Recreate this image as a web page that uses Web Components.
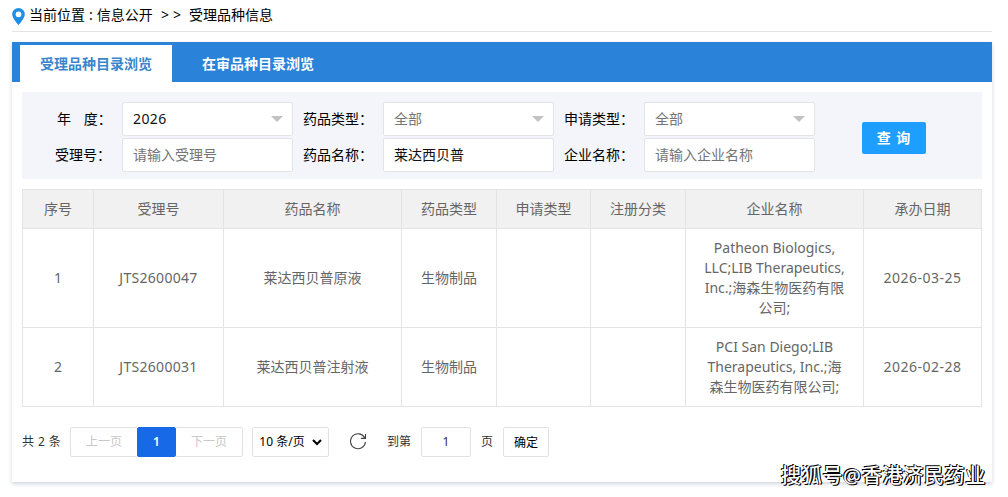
<!DOCTYPE html>
<html lang="zh-CN">
<head>
    <meta charset="UTF-8">
    <meta name="viewport" content="width=device-width, initial-scale=1.0">
    <title>受理品种信息</title>
    <style>
    body {
        margin: 0;
        height: 497px;
        overflow: hidden;
        position: relative;
        background: #fff;
        color: #000;
        font: 14px/20px 'Noto Sans', 'Noto Sans CJK SC', sans-serif;
    }
    </style>
</head>
<body>
<bread-crumb>当前位置 : 信息公开&nbsp; &gt; &gt; &nbsp;受理品种信息</bread-crumb>
<tab-card>
    <tab-item slot="tab" active>受理品种目录浏览</tab-item>
    <tab-item slot="tab">在审品种目录浏览</tab-item>
    <search-form></search-form>
    <drug-table></drug-table>
    <page-bar></page-bar>
</tab-card>
<water-mark>搜狐号@香港济民药业</water-mark>
<script>
class BaseElement extends HTMLElement {

    constructor() {
        super();
        this.root = this.attachShadow({mode: 'open'});
    }

    connectedCallback() {
        this.root.innerHTML = this.template();
    }
}

class BreadCrumb extends BaseElement {
    template() {
        return `
        <style>
        :host {
            display: flex;
            align-items: center;
            box-sizing: border-box;
            height: 32px;
            margin: 0 16px 10px 12px;
            padding-bottom: 1px;
            border-bottom: 1px solid #e4e4e4;
            word-spacing: .4px;
        }
        svg { margin: 2px 4px 0 0; }
        </style>
        <svg width="13" height="17" viewBox="0 0 13 17">
            <path fill="#1f8fe6" fill-rule="evenodd" d="M6.5 0A6.3 6.3 0 0 0 .2 6.3C.2 10.7 6.5 17 6.5 17S12.8 10.7 12.8 6.3A6.3 6.3 0 0 0 6.5 0zM6.5 3.4a2.9 2.9 0 1 1 0 5.8a2.9 2.9 0 0 1 0-5.8z"/>
        </svg>
        <slot></slot>`;
    }
}

class TabCard extends BaseElement {
    template() {
        return `
        <style>
        :host {
            display: block;
            box-sizing: border-box;
            height: 440px;
            margin: 0 16px 0 12px;
            background: #fff;
            box-shadow: 0 2px 4px rgba(50, 70, 120, .22);
        }
        .tabs {
            display: flex;
            box-sizing: border-box;
            height: 40px;
            padding: 3px 8px 0;
            background: #2a82d9;
        }
        .body { padding: 10px 10px 0; }
        </style>
        <div class="tabs"><slot name="tab"></slot></div>
        <div class="body"><slot></slot></div>`;
    }
}

class TabItem extends BaseElement {
    template() {
        return `
        <style>
        :host {
            box-sizing: border-box;
            width: 152px;
            margin-right: 10px;
            text-align: center;
            line-height: 38px;
            font-weight: 600;
            color: #fff;
        }
        :host([active]) {
            background: #fff;
            color: #3a86cc;
        }
        </style>
        <slot></slot>`;
    }
}

class FormField extends BaseElement {
    template() {
        const arrow = this.hasAttribute('select') ? '<i></i>' : '';
        return `
        <style>
        :host { display: flex; align-items: center; }
        label {
            flex: none;
            width: var(--label-width, 80px);
            white-space: pre;
        }
        :host([year]) label { text-indent: 2px; word-spacing: .6px; }
        .box {
            display: flex;
            align-items: center;
            justify-content: space-between;
            box-sizing: border-box;
            width: 171px;
            height: 34px;
            padding: 0 10px;
            border: 1px solid #e4e4e8;
            border-radius: 2px;
            background: #fff;
            color: #757575;
        }
        :host([filled]) .box { color: #111; }
        :host([year]) .box { letter-spacing: .4px; }
        i {
            margin-right: -1px;
            border: 6px solid transparent;
            border-top-color: #c2c2c2;
            border-bottom: 0;
        }
        </style>
        <label>${this.getAttribute('label')}</label>
        <div class="box"><slot></slot>${arrow}</div>`;
    }
}

class SearchForm extends BaseElement {
    template() {
        return `
        <style>
        :host {
            display: flex;
            align-items: center;
            box-sizing: border-box;
            height: 87px;
            margin-bottom: 10px;
            padding: 2px 0 0 33px;
            background: #f3f5fa;
        }
        .fields {
            display: grid;
            grid-template-columns: 238px 251px 251px;
            gap: 2px 10px;
        }
        .first { --label-width: 67px; }
        button {
            width: 64px;
            height: 32px;
            margin: 2px 0 0 47px;
            padding: 0;
            border: 0;
            border-radius: 2px;
            background: #1e9fff;
            color: #fff;
            font: 600 14px/32px 'Noto Sans', 'Noto Sans CJK SC', sans-serif;
            letter-spacing: 1px;
        }
        </style>
        <div class="fields">
            <form-field class="first" label="年   度：" year select filled>2026</form-field>
            <form-field label="药品类型：" select>全部</form-field>
            <form-field label="申请类型：" select>全部</form-field>
            <form-field class="first" label="受理号：">请输入受理号</form-field>
            <form-field label="药品名称：" filled>莱达西贝普</form-field>
            <form-field label="企业名称：">请输入企业名称</form-field>
        </div>
        <button>查 询</button>`;
    }
}

const COLUMNS = [
    ['序号', 71], ['受理号', 130], ['药品名称', 178], ['药品类型', 95],
    ['申请类型', 94], ['注册分类', 95], ['企业名称', 178], ['承办日期', 118]
];

const ROWS = [
    ['1', 'JTS2600047', '莱达西贝普原液', '生物制品', '', '',
        'Patheon Biologics,<br>LLC;LIB Therapeutics,<br>Inc.;海森生物医药有限<br>公司;', '2026-03-25'],
    ['2', 'JTS2600031', '莱达西贝普注射液', '生物制品', '', '',
        'PCI San Diego;LIB<br>Therapeutics, Inc.;海<br>森生物医药有限公司;', '2026-02-28']
];

class DrugTable extends BaseElement {
    template() {
        return `
        <style>
        :host { display: block; color: #666; }
        table {
            width: 960px;
            table-layout: fixed;
            border-collapse: collapse;
            text-align: center;
        }
        th, td {
            padding: 0;
            border: 1px solid #e4e4e4;
            font-weight: 400;
            white-space: nowrap;
        }
        th { height: 38px; background: #f1f1f1; }
        tr:nth-child(1) td { height: 98px; }
        tr:nth-child(2) td { height: 78px; }
        td:nth-child(2) { letter-spacing: .3px; }
        td:nth-child(8) { letter-spacing: .5px; }
        </style>
        <table>
            <colgroup>${COLUMNS.map(c => `<col style="width: ${c[1]}px">`).join('')}</colgroup>
            <thead><tr>${COLUMNS.map(c => `<th>${c[0]}</th>`).join('')}</tr></thead>
            <tbody>${ROWS.map(r => `<tr>${r.map(v => `<td>${v}</td>`).join('')}</tr>`).join('')}</tbody>
        </table>`;
    }
}

class PageBar extends BaseElement {
    template() {
        return `
        <style>
        :host {
            display: flex;
            align-items: center;
            height: 30px;
            margin-top: 20px;
            font-size: 12px;
            color: #333;
            white-space: pre;
        }
        .box {
            display: flex;
            align-items: center;
            justify-content: center;
            box-sizing: border-box;
            height: 30px;
            border: 1px solid #e2e2e2;
            border-radius: 2px;
            background: #fff;
        }
        .total { width: 48px; word-spacing: .8px; }
        .prev, .next { width: 68px; color: #c8c8c8; }
        .current {
            width: 39px;
            margin: 0 -1px;
            border-color: #1769e8;
            background: #1769e8;
            color: #fff;
            font-weight: 600;
            z-index: 1;
        }
        .limit { width: 77px; margin: 0 20px 0 9px; gap: 7px; color: #000; }
        .to { margin: 0 10px 0 20px; }
        .num { width: 50px; }
        .page { margin: 0 10px; }
        .ok { width: 46px; padding-top: 2px; color: #000; }
        </style>
        <span class="total">共 2 条</span>
        <span class="box prev">上一页</span>
        <span class="box current">1</span>
        <span class="box next">下一页</span>
        <span class="box limit">10 条/页<svg width="10" height="7" viewBox="0 0 10 7" fill="none" stroke="#000" stroke-width="2"><path d="M1 1l4 4l4-4"/></svg></span>
        <svg width="18" height="18" viewBox="0 0 18 18" fill="none" stroke="#444" stroke-width="1.1"><path d="M15.8 5A7.5 7.5 0 1 0 16.5 9M16.5 1v4.4h-4.6"/></svg>
        <span class="to">到第</span>
        <span class="box num">1</span>
        <span class="page">页</span>
        <span class="box ok">确定</span>`.replace(/>\s+</g, '><');
    }
}

class WaterMark extends BaseElement {
    template() {
        return `
        <style>
        :host {
            position: absolute;
            left: 781px;
            top: 462px;
            font-size: 20px;
            line-height: 28px;
            font-weight: 500;
            letter-spacing: .7px;
            white-space: nowrap;
            color: #fff;
            text-shadow: -1px -1px 0 #000, 1px 1px 0 #000, 1px 0 0 #000;
        }
        </style>
        <slot></slot>`;
    }
}

customElements.define('bread-crumb', BreadCrumb);
customElements.define('tab-card', TabCard);
customElements.define('tab-item', TabItem);
customElements.define('form-field', FormField);
customElements.define('search-form', SearchForm);
customElements.define('drug-table', DrugTable);
customElements.define('page-bar', PageBar);
customElements.define('water-mark', WaterMark);
</script>
</body>
</html>
